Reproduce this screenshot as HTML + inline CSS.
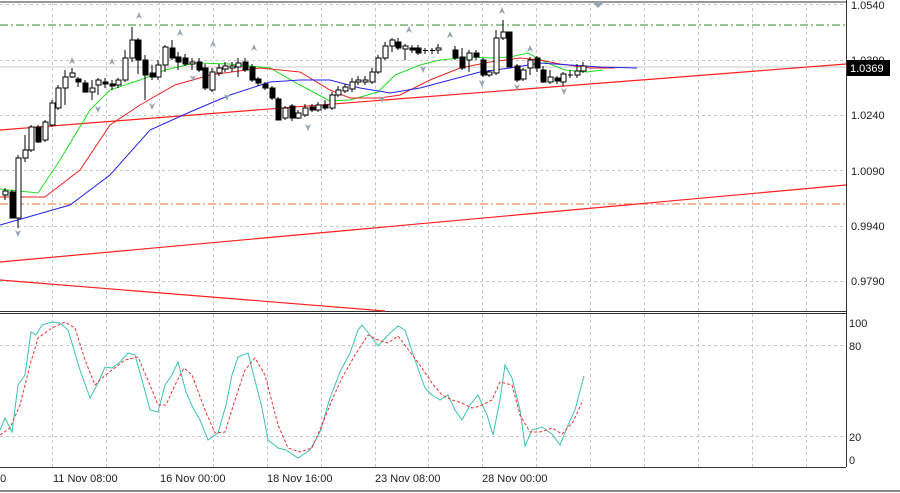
<!DOCTYPE html>
<html><head><style>
html,body{margin:0;padding:0;background:#fff;}
svg{display:block;font-family:"Liberation Sans",sans-serif;}
</style></head><body>
<svg width="900" height="493" viewBox="0 0 900 493" xmlns="http://www.w3.org/2000/svg">
<rect width="900" height="493" fill="#fff"/>
<!-- grid -->
<g stroke="#c8c8c8" stroke-dasharray="3,3" stroke-width="1">
<line x1="52.5" y1="2" x2="52.5" y2="467"/><line x1="106.5" y1="2" x2="106.5" y2="467"/><line x1="159.5" y1="2" x2="159.5" y2="467"/><line x1="213.5" y1="2" x2="213.5" y2="467"/><line x1="267.5" y1="2" x2="267.5" y2="467"/><line x1="321.5" y1="2" x2="321.5" y2="467"/><line x1="375.5" y1="2" x2="375.5" y2="467"/><line x1="428.5" y1="2" x2="428.5" y2="467"/><line x1="482.5" y1="2" x2="482.5" y2="467"/><line x1="536.5" y1="2" x2="536.5" y2="467"/><line x1="590.5" y1="2" x2="590.5" y2="467"/><line x1="644.5" y1="2" x2="644.5" y2="467"/><line x1="698.5" y1="2" x2="698.5" y2="467"/><line x1="752.5" y1="2" x2="752.5" y2="467"/><line x1="806.5" y1="2" x2="806.5" y2="467"/>
<line x1="0" y1="4.5" x2="846" y2="4.5"/><line x1="0" y1="60.5" x2="846" y2="60.5"/><line x1="0" y1="115.5" x2="846" y2="115.5"/><line x1="0" y1="170.5" x2="846" y2="170.5"/><line x1="0" y1="226.5" x2="846" y2="226.5"/><line x1="0" y1="281.5" x2="846" y2="281.5"/>
<line x1="0" y1="345.5" x2="846" y2="345.5"/><line x1="0" y1="436.5" x2="846" y2="436.5"/>
</g>
<!-- frames -->
<line x1="0" y1="2" x2="846" y2="2" stroke="#999" stroke-width="2"/>
<line x1="846.5" y1="0" x2="846.5" y2="467" stroke="#333"/>
<line x1="0" y1="311.5" x2="846" y2="311.5" stroke="#333"/>
<line x1="0" y1="313.5" x2="846" y2="313.5" stroke="#333"/>
<line x1="0" y1="467.5" x2="846" y2="467.5" stroke="#333"/>
<line x1="0" y1="491" x2="900" y2="491" stroke="#888" stroke-width="2"/>
<!-- levels -->
<line x1="0" y1="25" x2="846" y2="25" stroke="#3a8a3a" stroke-dasharray="8,3,2,3"/>
<line x1="0" y1="204" x2="846" y2="204" stroke="#f4a07a" stroke-width="1.5" stroke-dasharray="8,3,2,3"/>
<line x1="0" y1="67" x2="846" y2="67" stroke="#c8c8c8"/>
<!-- trendlines -->
<g stroke="#ff2020" stroke-width="1.2">
<line x1="0" y1="130" x2="846" y2="64"/>
<line x1="0" y1="262" x2="846" y2="185"/>
<line x1="0" y1="280" x2="385" y2="311"/>
</g>
<!-- MAs -->
<polyline fill="none" stroke="#22dd22" points="0,189 38,193 60,160 90,110 110,90 140,80 165,70 195,63 230,64 270,68 300,85 330,101 350,100 378,92 395,75 420,65 440,60 470,57 490,58 510,57 528,53 545,62 565,70 587,72 603,70"/>
<polyline fill="none" stroke="#ee2222" points="0,197 45,197 80,170 110,125 140,105 175,85 210,75 260,68 300,72 330,90 350,98 380,98 400,95 430,80 460,68 490,62 520,58 540,60 560,64 590,68 615,68"/>
<polyline fill="none" stroke="#2222ee" points="0,225 70,205 110,175 150,130 190,112 230,95 270,82 300,80 330,80 360,88 390,93 420,88 450,80 480,72 510,68 540,63 570,65 600,67 637,68"/>
<!-- candles -->
<g stroke="#000" stroke-width="1">
<line x1="5" y1="188" x2="5" y2="200"/><rect x="3" y="191" width="5" height="4" fill="#fff"/>
<line x1="12" y1="190" x2="12" y2="218"/><rect x="10" y="192" width="5" height="26" fill="#000"/>
<line x1="18" y1="155" x2="18" y2="228"/><rect x="16" y="158" width="5" height="60" fill="#fff"/>
<line x1="25" y1="135" x2="25" y2="162"/><rect x="23" y="150" width="5" height="8" fill="#fff"/>
<line x1="31" y1="125" x2="31" y2="152"/><rect x="29" y="127" width="5" height="23" fill="#fff"/>
<line x1="38" y1="125" x2="38" y2="143"/><rect x="36" y="127" width="5" height="15" fill="#000"/>
<line x1="45" y1="120" x2="45" y2="142"/><rect x="43" y="122" width="5" height="18" fill="#fff"/>
<line x1="52" y1="100" x2="52" y2="127"/><rect x="50" y="103" width="5" height="22" fill="#fff"/>
<line x1="58" y1="85" x2="58" y2="110"/><rect x="56" y="88" width="5" height="20" fill="#fff"/>
<line x1="65" y1="70" x2="65" y2="105"/><rect x="63" y="77" width="5" height="11" fill="#fff"/>
<line x1="72" y1="68" x2="72" y2="78"/><rect x="70" y="73" width="5" height="4" fill="#fff"/>
<line x1="78" y1="77" x2="78" y2="87"/><rect x="76" y="79" width="5" height="3" fill="#000"/>
<line x1="85" y1="80" x2="85" y2="93"/><rect x="83" y="83" width="5" height="9" fill="#000"/>
<line x1="92" y1="80" x2="92" y2="100"/><rect x="90" y="88" width="5" height="4" fill="#fff"/>
<line x1="98" y1="78" x2="98" y2="95"/><rect x="96" y="80" width="5" height="5" fill="#fff"/>
<line x1="105" y1="78" x2="105" y2="88"/><rect x="103" y="82" width="5" height="2" fill="#000"/>
<line x1="112" y1="80" x2="112" y2="90"/><rect x="110" y="84" width="5" height="2" fill="#000"/>
<line x1="118" y1="78" x2="118" y2="88"/><rect x="116" y="80" width="5" height="5" fill="#fff"/>
<line x1="125" y1="50" x2="125" y2="82"/><rect x="123" y="58" width="5" height="22" fill="#fff"/>
<line x1="132" y1="27" x2="132" y2="62"/><rect x="130" y="40" width="5" height="18" fill="#fff"/>
<line x1="138" y1="38" x2="138" y2="74"/><rect x="136" y="40" width="5" height="20" fill="#000"/>
<line x1="145" y1="55" x2="145" y2="100"/><rect x="143" y="60" width="5" height="15" fill="#000"/>
<line x1="152" y1="65" x2="152" y2="80"/><rect x="150" y="73" width="5" height="4" fill="#000"/>
<line x1="158" y1="60" x2="158" y2="80"/><rect x="156" y="65" width="5" height="12" fill="#fff"/>
<line x1="165" y1="45" x2="165" y2="72"/><rect x="163" y="47" width="5" height="18" fill="#fff"/>
<line x1="172" y1="40" x2="172" y2="60"/><rect x="170" y="48" width="5" height="10" fill="#000"/>
<line x1="178" y1="52" x2="178" y2="70"/><rect x="176" y="57" width="5" height="5" fill="#000"/>
<line x1="185" y1="54" x2="185" y2="66"/><rect x="183" y="58" width="5" height="6" fill="#000"/>
<line x1="192" y1="58" x2="192" y2="70"/><rect x="190" y="62" width="5" height="2" fill="#fff"/>
<line x1="199" y1="58" x2="199" y2="72"/><rect x="197" y="62" width="5" height="8" fill="#000"/>
<line x1="205" y1="64" x2="205" y2="90"/><rect x="203" y="68" width="5" height="20" fill="#000"/>
<line x1="212" y1="68" x2="212" y2="92"/><rect x="210" y="72" width="5" height="18" fill="#fff"/>
<line x1="219" y1="64" x2="219" y2="76"/><rect x="217" y="68" width="5" height="5" fill="#fff"/>
<line x1="225" y1="62" x2="225" y2="72"/><rect x="223" y="66" width="5" height="3" fill="#fff"/>
<line x1="232" y1="62" x2="232" y2="72"/><rect x="230" y="66" width="5" height="2" fill="#fff"/>
<line x1="238" y1="58" x2="238" y2="77"/><rect x="236" y="63" width="5" height="4" fill="#fff"/>
<line x1="245" y1="58" x2="245" y2="72"/><rect x="243" y="62" width="5" height="8" fill="#000"/>
<line x1="252" y1="64" x2="252" y2="82"/><rect x="250" y="67" width="5" height="13" fill="#000"/>
<line x1="258" y1="77" x2="258" y2="86"/><rect x="256" y="79" width="5" height="4" fill="#000"/>
<line x1="265" y1="82" x2="265" y2="90"/><rect x="263" y="84" width="5" height="4" fill="#000"/>
<line x1="272" y1="86" x2="272" y2="100"/><rect x="270" y="88" width="5" height="10" fill="#000"/>
<line x1="278" y1="97" x2="278" y2="120"/><rect x="276" y="99" width="5" height="21" fill="#000"/>
<line x1="285" y1="106" x2="285" y2="120"/><rect x="283" y="108" width="5" height="10" fill="#fff"/>
<line x1="292" y1="104" x2="292" y2="121"/><rect x="290" y="106" width="5" height="12" fill="#000"/>
<line x1="298" y1="110" x2="298" y2="119"/><rect x="296" y="113" width="5" height="5" fill="#fff"/>
<line x1="305" y1="104" x2="305" y2="117"/><rect x="303" y="108" width="5" height="7" fill="#fff"/>
<line x1="312" y1="104" x2="312" y2="112"/><rect x="310" y="107" width="5" height="3" fill="#000"/>
<line x1="318" y1="102" x2="318" y2="112"/><rect x="316" y="105" width="5" height="5" fill="#fff"/>
<line x1="325" y1="100" x2="325" y2="110"/><rect x="323" y="105" width="5" height="3" fill="#000"/>
<line x1="332" y1="92" x2="332" y2="110"/><rect x="330" y="95" width="5" height="13" fill="#fff"/>
<line x1="338" y1="86" x2="338" y2="97"/><rect x="336" y="90" width="5" height="5" fill="#fff"/>
<line x1="345" y1="84" x2="345" y2="93"/><rect x="343" y="87" width="5" height="4" fill="#fff"/>
<line x1="352" y1="78" x2="352" y2="92"/><rect x="350" y="82" width="5" height="7" fill="#fff"/>
<line x1="358" y1="76" x2="358" y2="85"/><rect x="356" y="80" width="5" height="2" fill="#fff"/>
<line x1="365" y1="76" x2="365" y2="85"/><rect x="363" y="80" width="5" height="2" fill="#fff"/>
<line x1="372" y1="68" x2="372" y2="84"/><rect x="370" y="72" width="5" height="10" fill="#fff"/>
<line x1="378" y1="55" x2="378" y2="74"/><rect x="376" y="58" width="5" height="14" fill="#fff"/>
<line x1="385" y1="42" x2="385" y2="60"/><rect x="383" y="46" width="5" height="12" fill="#fff"/>
<line x1="392" y1="38" x2="392" y2="52"/><rect x="390" y="40" width="5" height="6" fill="#fff"/>
<line x1="398" y1="38" x2="398" y2="50"/><rect x="396" y="42" width="5" height="6" fill="#000"/>
<line x1="405" y1="44" x2="405" y2="60"/><rect x="403" y="46" width="5" height="3" fill="#fff"/>
<line x1="412" y1="45" x2="412" y2="53"/><rect x="410" y="48" width="5" height="2" fill="#000"/>
<line x1="418" y1="45" x2="418" y2="55"/><rect x="416" y="48" width="5" height="5" fill="#000"/>
<line x1="425" y1="48" x2="425" y2="54"/><line x1="423" y1="50.5" x2="428" y2="50.5"/>
<line x1="432" y1="48" x2="432" y2="54"/><line x1="430" y1="50.5" x2="435" y2="50.5"/>
<line x1="438" y1="44" x2="438" y2="54"/><rect x="436" y="48" width="5" height="2" fill="#fff"/>
<line x1="455" y1="46" x2="455" y2="60"/><rect x="453" y="50" width="5" height="8" fill="#000"/>
<line x1="462" y1="48" x2="462" y2="70"/><rect x="460" y="57" width="5" height="11" fill="#000"/>
<line x1="469" y1="50" x2="469" y2="72"/><rect x="467" y="53" width="5" height="7" fill="#fff"/>
<line x1="476" y1="50" x2="476" y2="60"/><rect x="474" y="53" width="5" height="4" fill="#000"/>
<line x1="483" y1="58" x2="483" y2="77"/><rect x="481" y="60" width="5" height="15" fill="#000"/>
<line x1="489" y1="70" x2="489" y2="77"/><rect x="487" y="72" width="5" height="3" fill="#fff"/>
<line x1="496" y1="30" x2="496" y2="75"/><rect x="494" y="38" width="5" height="35" fill="#fff"/>
<line x1="503" y1="20" x2="503" y2="40"/><rect x="501" y="32" width="5" height="6" fill="#fff"/>
<line x1="509" y1="32" x2="509" y2="67"/><rect x="507" y="32" width="5" height="35" fill="#000"/>
<line x1="517" y1="64" x2="517" y2="82"/><rect x="515" y="66" width="5" height="14" fill="#000"/>
<line x1="523" y1="68" x2="523" y2="81"/><rect x="521" y="70" width="5" height="9" fill="#fff"/>
<line x1="530" y1="57" x2="530" y2="75"/><rect x="528" y="60" width="5" height="8" fill="#fff"/>
<line x1="537" y1="56" x2="537" y2="72"/><rect x="535" y="58" width="5" height="10" fill="#000"/>
<line x1="543" y1="66" x2="543" y2="83"/><rect x="541" y="70" width="5" height="12" fill="#000"/>
<line x1="550" y1="70" x2="550" y2="84"/><rect x="548" y="77" width="5" height="5" fill="#fff"/>
<line x1="557" y1="76" x2="557" y2="84"/><rect x="555" y="78" width="5" height="3" fill="#000"/>
<line x1="563" y1="72" x2="563" y2="86"/><rect x="561" y="74" width="5" height="8" fill="#fff"/>
<line x1="570" y1="70" x2="570" y2="78"/><line x1="568" y1="75" x2="573" y2="75"/>
<line x1="577" y1="64" x2="577" y2="78"/><rect x="575" y="71" width="5" height="4" fill="#fff"/>
<line x1="583" y1="62" x2="583" y2="73"/><rect x="581" y="66" width="5" height="5" fill="#fff"/>
</g>
<!-- fractal arrows -->
<g fill="#9aa4b0">
<path d="M139,12 l-3,7 3,-2 3,2z"/><path d="M72,57 l-3,7 3,-2 3,2z"/><path d="M112,58 l-3,7 3,-2 3,2z"/><path d="M180,29 l-3,7 3,-2 3,2z"/><path d="M213,40 l-3,7 3,-2 3,2z"/><path d="M254,44 l-3,7 3,-2 3,2z"/><path d="M409,26 l-3,7 3,-2 3,2z"/><path d="M450,31 l-3,7 3,-2 3,2z"/><path d="M502,7 l-3,7 3,-2 3,2z"/><path d="M530,45 l-3,7 3,-2 3,2z"/>
<path d="M18,237 l-3,-7 3,2 3,-2z"/><path d="M98,113 l-3,-7 3,2 3,-2z"/><path d="M152,110 l-3,-7 3,2 3,-2z"/><path d="M193,82 l-3,-7 3,2 3,-2z"/><path d="M227,101 l-3,-7 3,2 3,-2z"/><path d="M308,131 l-3,-7 3,2 3,-2z"/><path d="M423,73 l-3,-7 3,2 3,-2z"/><path d="M382,103 l-3,-7 3,2 3,-2z"/><path d="M482,87 l-3,-7 3,2 3,-2z"/><path d="M517,91 l-3,-7 3,2 3,-2z"/><path d="M564,95 l-3,-7 3,2 3,-2z"/>
<path d="M592,2 h12 l-6,6z"/>
</g>
<!-- stochastic -->
<polyline fill="none" stroke="#3cc2b4" points="0,430 5,418 12,432 18,385 25,375 31,332 36,335 42,325 52,322 60,323 68,330 80,370 90,398 98,383 105,367 112,368 120,362 128,353 135,355 142,380 150,410 158,412 165,385 172,375 178,362 186,392 193,408 200,420 208,440 218,433 226,405 232,375 238,357 248,353 262,408 268,440 278,448 286,450 298,458 310,450 320,432 330,398 340,372 350,353 358,330 362,325 370,335 378,346 388,335 398,326 405,330 415,360 425,388 432,395 440,400 448,395 455,410 462,420 470,405 478,395 487,415 493,435 500,400 505,365 512,378 520,410 525,446 532,430 542,427 552,434 560,445 568,425 575,410 584,376"/>
<polyline fill="none" stroke="#ee3333" stroke-dasharray="3,2" points="0,435 10,428 20,405 30,365 38,338 52,328 65,322 75,328 85,360 95,385 102,378 112,370 125,360 138,357 150,385 158,405 166,405 175,385 184,368 192,375 205,410 215,433 225,432 235,400 245,370 255,358 265,375 278,425 288,448 300,452 312,448 322,425 332,400 342,378 355,355 368,335 378,340 388,343 398,336 410,352 420,365 432,383 442,395 452,400 462,403 472,408 480,406 492,400 500,382 512,385 520,415 530,432 540,432 552,428 562,434 573,422 583,400"/>
<!-- axis labels -->
<g font-size="11" fill="#222">
<text x="851" y="9">1.0540</text>
<text x="851" y="64">1.0390</text>
<text x="851" y="119">1.0240</text>
<text x="851" y="175">1.0090</text>
<text x="851" y="230">0.9940</text>
<text x="851" y="285">0.9790</text>
<text x="849" y="327">100</text>
<text x="849" y="350">80</text>
<text x="849" y="441">20</text>
<text x="849" y="464">0</text>
<text x="-6" y="482">00</text>
<text x="53" y="482">11 Nov 08:00</text>
<text x="160" y="482">16 Nov 00:00</text>
<text x="267" y="482">18 Nov 16:00</text>
<text x="375" y="482">23 Nov 08:00</text>
<text x="482" y="482">28 Nov 00:00</text>
</g>
<rect x="847" y="60" width="43" height="16" fill="#000"/>
<text x="850" y="72" font-size="11" fill="#fff">1.0369</text>
</svg>
</body></html>
